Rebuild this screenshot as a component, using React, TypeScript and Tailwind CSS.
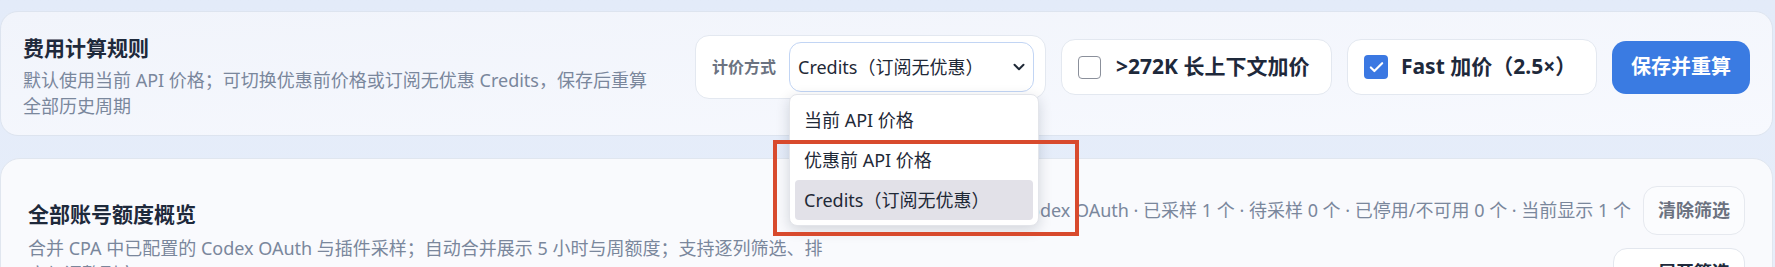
import { Check, ChevronDown } from 'lucide-react';

const pricingOptions = ['当前 API 价格', '优惠前 API 价格', 'Credits（订阅无优惠）'];

export default function App() {
  const selected = 'Credits（订阅无优惠）';

  return (
    <div className="relative h-[267px] overflow-hidden bg-linear-to-b from-[#e3ebf9] to-[#e7eefa] pt-[11px] pr-[2px] font-['Noto_Sans','Noto_Sans_CJK_SC',sans-serif]">
      {/* 费用计算规则 */}
      <section className="flex h-[125px] items-start justify-between rounded-[18px] border border-[#dde4ef] bg-linear-to-br from-[#f1f4fb] to-[#f7f9fe] p-[22px]">
        <div className="w-[636px]">
          <h2 className="text-[21px] font-bold leading-[28px] text-[#1e293b]">费用计算规则</h2>
          <p className="mt-[5px] text-[18px] leading-[26px] text-[#7a879c]">
            默认使用当前 API 价格；可切换优惠前价格或订阅无优惠 Credits，保存后重算全部历史周期
          </p>
        </div>

        <div className="mt-[1px] flex items-center gap-[15px]">
          <div className="flex h-[64px] w-[351px] items-center gap-[13px] rounded-[14px] border border-[#e3e8f0] bg-white pl-[16px] pr-[9px]">
            <span className="text-[16px] font-bold text-[#6b7280]">计价方式</span>
            <div className="relative">
              <div className="flex h-[50px] w-[245px] items-center justify-between rounded-[12px] border border-[#c2d5f4] bg-white pl-[8px] pr-[5px] text-[18px] text-[#1f2937]">
                <span>{selected}</span>
                <ChevronDown size={18} strokeWidth={2.6} className="text-[#1f2937]" />
              </div>
              <ul className="absolute left-0 top-[52px] z-10 w-[250px] rounded-[8px] border border-[#e3e5ea] bg-white p-[5px] shadow-[0_4px_14px_rgba(15,23,42,0.16)]">
                {pricingOptions.map((opt) => (
                  <li
                    key={opt}
                    className={`flex h-[40px] items-center rounded-[4px] pl-[9px] text-[18px] text-[#1f2937] ${opt === selected ? 'bg-[#e2e1e8]' : ''}`}
                  >
                    {opt}
                  </li>
                ))}
              </ul>
            </div>
          </div>

          <label className="flex h-[56px] w-[271px] items-center gap-[15px] rounded-[14px] border border-[#e3e8f0] bg-white pl-[16px]">
            <span className="h-[23px] w-[23px] rounded-[4px] border-[1.5px] border-[#8b909b] bg-white" />
            <span className="text-[21px] font-bold text-[#1e293b]">&gt;272K 长上下文加价</span>
          </label>

          <label className="flex h-[56px] w-[250px] items-center gap-[13px] rounded-[14px] border border-[#e3e8f0] bg-white pl-[16px]">
            <span className="flex h-[24px] w-[24px] items-center justify-center rounded-[4px] bg-[#3b78e2]">
              <Check size={17} strokeWidth={3} className="text-white" />
            </span>
            <span className="text-[21px] font-bold text-[#1e293b]">Fast 加价（2.5×）</span>
          </label>

          <button className="h-[53px] w-[138px] rounded-[14px] bg-[#3a7be2] text-[20px] font-bold text-white">
            保存并重算
          </button>
        </div>
      </section>

      {/* 全部账号额度概览 */}
      <section className="mt-[22px] flex items-center justify-between rounded-[20px] border border-[#e0e6ef] bg-[#f9fafd] p-[27px]">
        <div className="mt-[4px] w-[812px] shrink-0">
          <h2 className="text-[21px] font-bold leading-[28px] text-[#1e293b]">全部账号额度概览</h2>
          <p className="mt-[7px] text-[18px] leading-[26px] text-[#7a879c]">
            合并 CPA 中已配置的 Codex OAuth 与插件采样；自动合并展示 5 小时与周额度；支持逐列筛选、排序与调整列宽
          </p>
        </div>

        <div className="flex flex-col items-end gap-[13px]">
          <div className="flex items-center gap-[12px]">
            <span className="whitespace-nowrap text-[18px] text-[#7a879c]">
              共 1 个 Codex OAuth · 已采样 1 个 · 待采样 0 个 · 已停用/不可用 0 个 · 当前显示 1 个
            </span>
            <button className="h-[49px] w-[102px] shrink-0 rounded-[14px] border border-[#e6e9ef] bg-[#fbfcfe] text-[18px] font-bold text-[#6b7280]">
              清除筛选
            </button>
          </div>
          <button className="h-[49px] w-[132px] rounded-[14px] border border-[#e3e7ee] bg-white pl-[30px] text-[18px] font-bold text-[#1e293b]">
            展开筛选
          </button>
        </div>
      </section>

      {/* annotation */}
      <div className="absolute left-[773px] top-[140px] z-20 h-[96px] w-[306px] border-[4px] border-[#d84a2d]" />
    </div>
  );
}
